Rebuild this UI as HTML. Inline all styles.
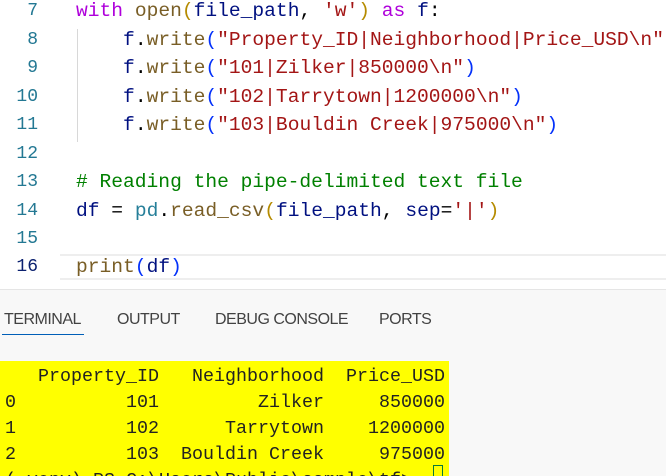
<!DOCTYPE html>
<html><head><meta charset="utf-8"><style>
*{margin:0;padding:0;box-sizing:border-box}
body{width:666px;height:476px;overflow:hidden;background:#fff;position:relative;font-family:"Liberation Mono",monospace}
.ln{position:absolute;left:0;width:38px;text-align:right;color:#237893;font-size:18px;font-family:"Liberation Mono",monospace}
.code{position:absolute;left:76px;font-size:19.6px;white-space:pre;color:#000}
.k{color:#af00db}.f{color:#795e26}.v{color:#001080}.s{color:#a31515}.c{color:#008000}.p1{color:#b58b00}.p2{color:#0431fa}
.guide{position:absolute;left:77px;top:29px;height:113px;border-left:1px solid #d8d8d8}
.cur{position:absolute;left:60px;top:254px;width:606px;height:26px;border-top:2px solid #eee;border-bottom:2px solid #eee}
.panel{position:absolute;left:0;top:289px;width:666px;height:187px;background:#f8f8f8;border-top:1px solid #e5e5e5}
.tab{position:absolute;top:311px;font-family:"Liberation Sans",sans-serif;font-size:16px;color:#424242;letter-spacing:-0.5px}
.term{position:absolute;left:0;top:361px;width:449px;height:115px;background:#ffff00;overflow:hidden}
.tl{position:absolute;left:5px;font-size:18.33px;white-space:pre;color:#222}
</style></head><body>
<div class="guide"></div>
<div class="cur"></div>
<div class="ln" style="top:1px">7</div>
<div class="ln" style="top:30px">8</div>
<div class="ln" style="top:58px">9</div>
<div class="ln" style="top:87px">10</div>
<div class="ln" style="top:115px">11</div>
<div class="ln" style="top:144px">12</div>
<div class="ln" style="top:172px">13</div>
<div class="ln" style="top:201px">14</div>
<div class="ln" style="top:229px">15</div>
<div class="ln" style="top:257px;color:#0b216f">16</div>

<div class="code" style="top:0px"><span class="k">with</span> <span class="f">open</span><span class="p1">(</span><span class="v">file_path</span>, <span class="s">'w'</span><span class="p1">)</span> <span class="k">as</span> <span class="v">f</span>:</div>
<div class="code" style="top:29px">    <span class="v">f</span>.<span class="f">write</span><span class="p2">(</span><span class="s">"Property_ID|Neighborhood|Price_USD\n"</span><span class="p2">)</span></div>
<div class="code" style="top:57px">    <span class="v">f</span>.<span class="f">write</span><span class="p2">(</span><span class="s">"101|Zilker|850000\n"</span><span class="p2">)</span></div>
<div class="code" style="top:86px">    <span class="v">f</span>.<span class="f">write</span><span class="p2">(</span><span class="s">"102|Tarrytown|1200000\n"</span><span class="p2">)</span></div>
<div class="code" style="top:114px">    <span class="v">f</span>.<span class="f">write</span><span class="p2">(</span><span class="s">"103|Bouldin Creek|975000\n"</span><span class="p2">)</span></div>
<div class="code c" style="top:171px"># Reading the pipe-delimited text file</div>
<div class="code" style="top:200px"><span class="v">df</span> = <span style="color:#267f99">pd</span>.<span class="f">read_csv</span><span class="p1">(</span><span class="v">file_path</span>, <span class="v">sep</span>=<span class="s">'|'</span><span class="p1">)</span></div>
<div class="code" style="top:256px"><span class="f">print</span><span class="p2">(</span><span class="v">df</span><span class="p2">)</span></div>

<div class="panel"></div>
<div class="tab" style="left:4px">TERMINAL</div>
<div style="position:absolute;left:2px;top:334px;width:82px;height:1px;background:#005fb8"></div>
<div class="tab" style="left:117px">OUTPUT</div>
<div class="tab" style="left:215px">DEBUG CONSOLE</div>
<div class="tab" style="left:379px">PORTS</div>

<div class="term">
<div class="tl" style="top:5px">   Property_ID   Neighborhood  Price_USD</div>
<div class="tl" style="top:31px">0          101         Zilker     850000</div>
<div class="tl" style="top:57px">1          102      Tarrytown    1200000</div>
<div class="tl" style="top:83px">2          103  Bouldin Creek     975000</div>
<div class="tl" style="top:109px">(.venv) PS C:\Users\Public\sample\tf&gt; </div>
<div style="position:absolute;left:433px;top:104px;width:10px;height:20px;border:1px solid #0a7a3a"></div>
</div>
</body></html>
